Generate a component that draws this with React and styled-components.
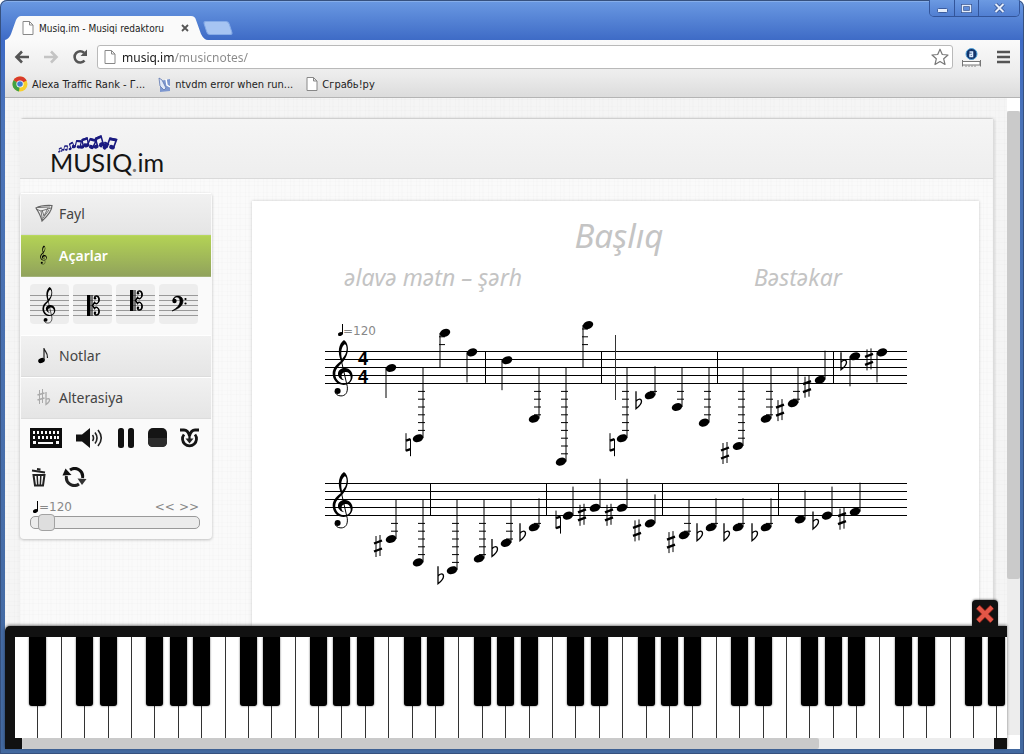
import React, { useState } from 'react';
import styled, { createGlobalStyle, css } from 'styled-components';

const GlobalStyle = createGlobalStyle`
  * {
    box-sizing: border-box;
  }

  body {
    margin: 0;
    background: #fff;
    font-family: "Noto Sans", "Open Sans", sans-serif;
    overflow: hidden;
  }

  button {
    padding: 0;
    border: 0;
    background: none;
    font: inherit;
    color: inherit;
    cursor: pointer;
  }

  svg {
    display: block;
  }
`;

const linen = css`
  background-image:
    repeating-linear-gradient(90deg, rgba(0, 0, 0, 0.01) 0 1px, transparent 1px 3px, rgba(0, 0, 0, 0.006) 3px 5px, transparent 5px 9px),
    repeating-linear-gradient(0deg, rgba(0, 0, 0, 0.01) 0 1px, transparent 1px 4px, rgba(0, 0, 0, 0.006) 4px 5px, transparent 5px 11px);
`;

/* browser window */

const Window = styled.div`
  display: flex;
  flex-direction: column;
  height: 100vh;
  padding: 0 4px 5px 5px;
  background: linear-gradient(#6b9ae3, #3e6bc6 40px, #4a73b8 120px, #43699f);
  border-radius: 7px 7px 0 0;
  box-shadow: inset 0 0 0 1px #36517f, inset 0 2px 0 #86aeea;
  overflow: hidden;
  font-family: "Noto Sans", "Open Sans", sans-serif;
`;

const TitleBar = styled.header`
  display: flex;
  align-items: flex-end;
  height: 40px;
  flex: none;
`;

const Tab = styled.div`
  display: flex;
  align-items: center;
  gap: 5px;
  width: 203px;
  height: 24px;
  padding: 0 19px 0 17px;
  background: #fafafa;
  clip-path: path("M0 24 Q4 23 6 18 L11 4 Q13 0 16 0 H186 Q190 0 191 4 L196 18 Q199 24 203 24 Z");
  font: 10px "DejaVu Sans Condensed", "Noto Sans", sans-serif;
  color: #222;
  white-space: nowrap;
`;

const TabTitle = styled.span`
  flex: 1;
`;

const TabClose = styled.button`
  width: 8px;
  height: 8px;
`;

const NewTab = styled.button`
  align-self: flex-end;
  width: 26px;
  height: 14px;
  margin: 0 0 5px -3px;
  background: #a6c4f2;
  border: 1px solid #86abe6;
  border-radius: 3px;
  transform: skewX(18deg);
`;

const WindowButtons = styled.div`
  display: flex;
  align-self: flex-start;
  height: 17px;
  margin-left: auto;
  border: 1px solid #33559a;
  border-top: 0;
  border-radius: 0 0 5px 5px;
  overflow: hidden;
`;

const WindowButton = styled.button`
  display: grid;
  place-items: center;
  width: ${({ $wide }) => ($wide ? 41 : 24)}px;
  background: linear-gradient(#6c9ae2, #517fd2);
  border-left: ${({ $first }) => ($first ? 0 : '1px solid #33559a')};
`;

const Toolbar = styled.div`
  display: flex;
  align-items: center;
  gap: 13px;
  flex: none;
  height: 34px;
  padding: 0 10px 0 9px;
  background: linear-gradient(#fafafa, #ececec);
`;

const ToolButton = styled.button`
  width: 16px;
  height: 16px;
`;

const AddressBar = styled.form`
  display: flex;
  align-items: center;
  flex: 1;
  height: 24px;
  margin: 0 -4px;
  padding: 0 3px 0 6px;
  gap: 6px;
  background: #fff;
  border: 1px solid #b9b9b9;
  border-radius: 3px;
`;

const AddressInput = styled.input`
  flex: 1;
  min-width: 0;
  padding: 0;
  border: 0;
  outline: 0;
  font: 12px "Noto Sans", sans-serif;
  color: transparent;
  background: linear-gradient(90deg, #1a1a1a 53px, #8a8a8a 53px);
  -webkit-background-clip: text;
  background-clip: text;
`;

const Bookmarks = styled.nav`
  display: flex;
  gap: 13px;
  flex: none;
  height: 24px;
  padding: 1px 7px 0;
  background: linear-gradient(#ececec, #dcdcdc);
  border-bottom: 1px solid #b4b4b4;
`;

const Bookmark = styled.a`
  display: flex;
  align-items: center;
  gap: 4px;
  height: 18px;
  font: 11px "DejaVu Sans Condensed", "Noto Sans", sans-serif;
  color: #222;
  text-decoration: none;
  white-space: nowrap;
`;

/* page inside the window */

const Viewport = styled.div`
  display: flex;
  flex: 1;
  min-height: 0;
  background: #fff;
`;

const Page = styled.div`
  display: flex;
  flex-direction: column;
  flex: 1;
  min-width: 0;
  background-color: #f5f5f5;
  ${linen}
`;

const PageBody = styled.main`
  flex: 1;
  min-height: 0;
  padding: 20px 13px 0 15px;
  overflow: hidden;
`;

const Shell = styled.div`
  display: flex;
  flex-direction: column;
  height: 100%;
  background-color: #fafafa;
  border-top: 1px solid #cfcfcf;
  border-right: 1px solid #dcdcdc;
  border-radius: 4px 4px 0 0;
  box-shadow: 1px 0 3px rgba(0, 0, 0, 0.12);
  ${linen}
`;

const Banner = styled.div`
  flex: none;
  height: 60px;
  padding: 15px 31px 0;
  background: linear-gradient(#f5f5f5, #eeeeee);
  border-bottom: 1px solid #dadada;
`;

const Columns = styled.div`
  display: flex;
  align-items: flex-start;
  gap: 40px;
  flex: 1;
  min-height: 0;
  padding-right: 14px;
`;

const Sidebar = styled.aside`
  flex: none;
  width: 192px;
  margin-top: 14px;
  padding: 0 1px;
  background: #fafafa;
  border-radius: 4px;
  box-shadow: 0 1px 3px rgba(0, 0, 0, 0.24);
`;

const MenuItem = styled.button`
  display: flex;
  align-items: center;
  gap: 7px;
  width: 100%;
  height: 42px;
  padding: 0 14px 2px;
  background: linear-gradient(#f1f1f1, #e5e5e5);
  border-top: 1px solid #fff;
  border-bottom: 1px solid #dcdcdc;
  font-size: 14px;
  color: #444;

  ${({ $active }) => $active && css`
    background: linear-gradient(#b3d255, #91a35c);
    border-top-color: #b8d85e;
    border-bottom-color: #a3b37a;
    color: #fff;
    font-weight: 600;
  `}
`;

const MenuIcon = styled.span`
  display: grid;
  place-items: center;
  width: 17px;
`;

const ClefRow = styled.div`
  display: grid;
  grid-template-columns: repeat(4, 39px);
  gap: 4px;
  padding: 7px 9px 11px;
`;

const ClefButton = styled.button`
  height: 40px;
  background: #ededed;
  border-radius: 4px;
`;

const Controls = styled.div`
  display: flex;
  flex-wrap: wrap;
  align-items: center;
  gap: 17px 13px;
  padding: 8px 9px 0;
`;

const ControlButton = styled.button`
  display: grid;
  place-items: center;
  width: ${({ $width }) => $width}px;
  height: 22px;
`;

const TempoRow = styled.div`
  display: flex;
  align-items: center;
  height: 18px;
  padding: 0 12px;
  margin-top: 10px;
  font: 12px "DejaVu Sans", sans-serif;
  color: #888;
`;

const TempoLabel = styled.label`
  display: flex;
  align-items: center;
  flex: 1;
`;

const Step = styled.button`
  margin-left: 4px;
`;

const Slider = styled.input.attrs({ type: 'range' })`
  appearance: none;
  display: block;
  width: 170px;
  height: 13px;
  margin: 0 9px;
  background: #ececec;
  border: 1px solid #999;
  border-radius: 5px;

  &::-webkit-slider-thumb {
    appearance: none;
    width: 17px;
    height: 17px;
    background: #dedede;
    border: 1px solid #a2a2a2;
    border-radius: 4px;
  }
`;

const SliderBox = styled.div`
  padding: 0 0 10px;
`;

const Paper = styled.section`
  flex: 1;
  min-width: 0;
  align-self: stretch;
  margin-top: 22px;
  padding: 10px 0 0 2px;
  background: #fff;
  box-shadow: 0 0 3px rgba(0, 0, 0, 0.2);
`;

const TitleInput = styled.input`
  display: block;
  width: 100%;
  height: 48px;
  padding: 0 0 0 5px;
  border: 0;
  outline: 0;
  background: none;
  font: italic 33px "Noto Sans", sans-serif;
  text-align: center;

  &::placeholder {
    color: #c4c4c4;
  }
`;

const Credits = styled.div`
  display: flex;
  justify-content: space-between;
  padding: 1px 42px 0 90px;
`;

const CreditInput = styled.input`
  width: 183px;
  height: 34px;
  padding: 0;
  border: 0;
  outline: 0;
  background: none;
  font: italic 23px "Noto Sans", sans-serif;

  &::placeholder {
    color: #c4c4c4;
  }
`;

const Score = styled.svg`
  width: 583px;
  max-width: 100%;
  margin: 24px auto 0;
`;

const Scrollbar = styled.div`
  flex: none;
  width: 13px;
  padding: 13px 0 14px;
  background: #fff;
`;

const ScrollTrack = styled.div`
  height: 100%;
  background: #ededed;
`;

const ScrollThumb = styled.div`
  width: ${({ $horizontal }) => ($horizontal ? '82%' : '100%')};
  height: ${({ $horizontal }) => ($horizontal ? '100%' : '75%')};
  background: #cacaca;
  border-radius: 2px;
`;

/* piano */

const Piano = styled.section`
  position: relative;
  flex: none;
  padding: 11px 0 0 10px;
  background: #111;
  border-radius: 5px 0 0 0;
  box-shadow: 0 -1px 3px rgba(0, 0, 0, 0.5);
`;

const PianoClose = styled.button`
  position: absolute;
  top: -26px;
  right: 9px;
  display: grid;
  place-items: center;
  width: 26px;
  height: 27px;
  background: #111;
  border-radius: 4px 4px 0 0;
  box-shadow: 0 -1px 2px rgba(0, 0, 0, 0.4);
`;

const KeyClip = styled.div`
  overflow: hidden;
`;

const Keys = styled.div`
  display: flex;
  height: 101px;
  margin-right: -14px;
`;

const KeySlot = styled.div`
  position: relative;
  flex: 1;
`;

const WhiteKey = styled.button`
  display: block;
  width: 100%;
  height: 100%;
  background: #fff;
  border-right: 1px solid #333;
`;

const BlackKey = styled.button`
  position: absolute;
  z-index: 1;
  top: 0;
  right: -8px;
  width: 17px;
  height: 69px;
  background: #000;
  border-radius: 0 0 3px 3px;
  box-shadow: 0 0 2px rgba(0, 0, 0, 0.7);
`;

const PianoScroll = styled.div`
  height: 11px;
  margin: 0 13px 0 7px;
  background: #ededed;
`;

/* music drawings */

const TrebleClef = () => (
  <g>
    <path
      fillRule="evenodd"
      d="M78 165 C67 140 70 114 87 102 C97 108 101 125 98 138 C94 156 86 166 74 178 C64 188 60 197 61 207 C63 222 74 232 88 232 C101 232 108 223 107 213 C106 203 99 197 91 198 C83 199 78 206 80 213 C81 218 84 220 88 223 C78 222 69 214 69 204 C69 193 79 185 91 186 C104 187 114 198 113 212 C112 228 100 237 86 237 C66 237 53 222 53 203 C53 188 62 177 78 165 Z M81 159 C90 150 95 141 95 128 C95 119 92 115 89 115 C80 121 76 138 81 159 Z"
    />
    <path d="M77 155 L97 242 C99 262 90 270 78 270 C68 270 62 265 60 257" fill="none" stroke="#000" strokeWidth="3" />
    <circle cx="68" cy="255" r="9" />
  </g>
);

const CClef = () => (
  <g>
    <rect width="3.500" height="21" />
    <rect x="4.500" width="1" height="21" />
    <path
      d="M7.500 3 C7.500 -0.200 12 0.200 12 4.500 C12 9 9 9.500 7.500 7.500 L5.500 10.500 L7.500 13.500 C9 11.500 12 12 12 16.500 C12 20.800 7.500 21.200 7.500 18"
      fill="none"
      stroke="#000"
      strokeWidth="1.500"
    />
    <circle cx="8" cy="3.200" r="1.200" />
    <circle cx="8" cy="17.800" r="1.200" />
    <path d="M11.500 1.500 Q14 4.500 11.500 8 Z M11.500 13 Q14 16.500 11.500 19.500 Z" />
  </g>
);

const BassClef = () => (
  <g>
    <circle cx="2.500" cy="5" r="2.200" />
    <path d="M1 5 C0 -1 11 -2 11 5 C11 10 6 13 0 15 C5 12 8 9 8 5 C8 0 2 0 2 4 Z" stroke="#000" strokeWidth="0.600" />
    <circle cx="13.500" cy="3" r="1.100" />
    <circle cx="13.500" cy="7.500" r="1.100" />
  </g>
);

const Sharp = () => (
  <g>
    <path d="M-2 -10 V11 M2 -11 V10" stroke="#000" strokeWidth="1" />
    <path d="M-4 -2.500 L4 -5.500 M-4 5.500 L4 2.500" stroke="#000" strokeWidth="2.400" />
  </g>
);

const Flat = () => (
  <path
    d="M-2 -11 V6.500 C0 5 3.500 2 3.500 -1 C3.500 -4 0 -4 -2 -1"
    fill="none"
    stroke="#000"
    strokeWidth="1.300"
  />
);

const Natural = () => (
  <g>
    <path d="M-2 -12 V6 M2.500 -6 V11" stroke="#000" strokeWidth="1" />
    <path d="M-2 -4.500 L2.500 -6 M-2 5.500 L2.500 4" stroke="#000" strokeWidth="2.400" />
  </g>
);

const QuarterNote = ({ x = 0, y = 0 }) => (
  <g transform={`translate(${x} ${y})`}>
    <ellipse cx="2.500" cy="10" rx="2.600" ry="1.900" transform="rotate(-20 2.500 10)" />
    <path d="M4.500 0 V10" stroke="#000" strokeWidth="1" />
  </g>
);

const ACCIDENTALS = {
  sharp: { Shape: Sharp, dx: -13, dy: 7 },
  flat: { Shape: Flat, dx: -12, dy: 7 },
  natural: { Shape: Natural, dx: -10, dy: 7 },
};

// distance between two neighbouring note positions
const HALF = 3.9;

// step counts down from the middle line
const STAVES = [
  {
    y: 50,
    bars: [160, 276, 392, 508],
    notes: [
      { x: 66, step: 0 },
      { x: 93, step: 18, sign: 'natural' },
      { x: 120, step: -9 },
      { x: 147, step: -4 },
      { x: 182, step: -2 },
      { x: 209, step: 13 },
      { x: 236, step: 24 },
      { x: 263, step: -11 },
      { x: 297, step: 18, sign: 'natural' },
      { x: 325, step: 7, sign: 'flat' },
      { x: 352, step: 10 },
      { x: 379, step: 14 },
      { x: 413, step: 20, sign: 'sharp' },
      { x: 441, step: 13 },
      { x: 468, step: 9, sign: 'sharp' },
      { x: 495, step: 3, sign: 'sharp' },
      { x: 530, step: -3, sign: 'flat' },
      { x: 557, step: -4, sign: 'sharp' },
    ],
  },
  {
    y: 182,
    bars: [105, 221, 337, 453],
    notes: [
      { x: 66, step: 10, sign: 'sharp' },
      { x: 93, step: 16 },
      { x: 127, step: 18, sign: 'flat' },
      { x: 154, step: 15 },
      { x: 181, step: 11, sign: 'flat' },
      { x: 209, step: 7, sign: 'flat' },
      { x: 243, step: 4, sign: 'natural' },
      { x: 270, step: 2, sign: 'sharp' },
      { x: 297, step: 2, sign: 'sharp' },
      { x: 325, step: 6, sign: 'sharp' },
      { x: 359, step: 9, sign: 'sharp' },
      { x: 386, step: 7, sign: 'flat' },
      { x: 413, step: 7, sign: 'flat' },
      { x: 441, step: 7, sign: 'flat' },
      { x: 475, step: 5 },
      { x: 502, step: 4, sign: 'flat' },
      { x: 530, step: 3, sign: 'sharp' },
    ],
  },
];

const ledgerSteps = (step) => {
  const steps = [];
  for (let s = 6; s < Math.abs(step); s += 2) {
    steps.push(step > 0 ? s : -s);
  }
  return steps;
};

const Note = ({ x, step, sign }) => {
  const y = step * HALF;
  const down = step <= 0;
  const stemX = down ? x - 5 : x + 5;
  const long = Math.abs(step) > 7;
  const stemEnd = long ? 0 : y + (down ? 30 : -29);
  const accidental = sign && ACCIDENTALS[sign];

  return (
    <g>
      <ellipse cx={x} cy={y} rx="5.400" ry="3.800" transform={`rotate(-20 ${x} ${y})`} />
      <line x1={stemX} x2={stemX} y1={y} y2={stemEnd} stroke="#000" />
      {ledgerSteps(step).map((s) => (
        <line
          key={s}
          x1={down ? stemX - 1 : stemX - 5}
          x2={down ? stemX + 5 : stemX + 2}
          y1={s * HALF}
          y2={s * HALF}
          stroke="#000"
        />
      ))}
      {accidental && (
        <g transform={`translate(${x + accidental.dx} ${y + accidental.dy})`}>
          <accidental.Shape />
        </g>
      )}
    </g>
  );
};

const Staff = ({ y, bars, notes }) => (
  <g transform={`translate(0 ${y})`}>
    {[-16, -8, 0, 8, 16].map((line) => (
      <line key={line} x1="0" x2="582" y1={line - 0.5} y2={line - 0.5} stroke="#000" shapeRendering="crispEdges" />
    ))}
    {bars.map((x) => (
      <line key={x} x1={x + 0.5} x2={x + 0.5} y1="-16" y2="16" stroke="#000" shapeRendering="crispEdges" />
    ))}
    <g transform="translate(-10 -62) scale(0.333)">
      <TrebleClef />
    </g>
    {notes.map((note) => (
      <Note key={note.x} {...note} />
    ))}
  </g>
);

const Sheet = ({ tempo }) => (
  <Score viewBox="0 0 583 280" role="img" aria-label="Notlar">
    <QuarterNote x={13} y={6} />
    <text x="18" y="17" fontSize="12" fill="#888" fontFamily="DejaVu Sans">={tempo}</text>
    {STAVES.map((staff) => (
      <Staff key={staff.y} {...staff} />
    ))}
    <text fontSize="18" fontWeight="700" fontFamily="Liberation Sans Narrow, Liberation Sans" textAnchor="middle">
      <tspan x="38" y="47">4</tspan>
      <tspan x="38" y="65">4</tspan>
    </text>
    <line x1="290.500" x2="290.500" y1="17" y2="82" stroke="#333" />
  </Score>
);

/* icons */

const PageIcon = () => (
  <svg width="12" height="14" viewBox="0 0 12 14">
    <path d="M1 0.500 H7.500 L11 4 V13.500 H1 Z M7.500 0.500 V4 H11" fill="#fff" stroke="#888" />
  </svg>
);

const ChromeIcon = () => (
  <svg width="16" height="16" viewBox="0 0 16 16">
    <circle cx="8" cy="8" r="7.500" fill="#f7cf2d" />
    <path d="M8 8 L1.500 4.200 A7.500 7.500 0 0 1 14.700 4.600 Z" fill="#d93a2b" />
    <path d="M8 8 L1.500 4.200 A7.500 7.500 0 0 0 7 15.400 Z" fill="#3fa144" />
    <circle cx="8" cy="8" r="3.600" fill="#fff" />
    <circle cx="8" cy="8" r="2.800" fill="#3f7bd0" />
  </svg>
);

const ToolsIcon = () => (
  <svg width="13" height="15" viewBox="0 0 13 15">
    <path d="M2 4 L12 2 V14 L2 15 Z" fill="#7d97cf" />
    <path d="M1 1 L4 3 L8 11 L6 13 L2 9 Z" fill="#dfe7f7" stroke="#5d76b0" strokeWidth="0.800" />
    <path d="M8 2 L9 8 L12 10" fill="none" stroke="#fff" strokeWidth="1.500" />
  </svg>
);

const CrossIcon = () => (
  <svg width="8" height="8" viewBox="0 0 8 8">
    <path d="M1 1 L7 7 M7 1 L1 7" stroke="#555" strokeWidth="1.800" />
  </svg>
);

const ArrowIcon = ({ color, flip }) => (
  <svg width="16" height="16" viewBox="0 0 16 16">
    <path
      d="M8 2.500 L2.500 8 L8 13.500 M3 8 H15"
      transform={flip ? 'translate(16 0) scale(-1 1)' : undefined}
      fill="none"
      stroke={color}
      strokeWidth="2.600"
    />
  </svg>
);

const ReloadIcon = () => (
  <svg width="16" height="16" viewBox="0 0 16 16">
    <path d="M12.500 11.500 A5.600 5.600 0 1 1 12 3.800" fill="none" stroke="#555" strokeWidth="2.600" />
    <path d="M15 0.500 V7 H8.500 Z" fill="#555" />
  </svg>
);

const StarIcon = () => (
  <svg width="18" height="18" viewBox="0 0 18 18">
    <path
      d="M9 1.200 L11.300 6.500 L17 7 L12.700 10.800 L14 16.500 L9 13.500 L4 16.500 L5.300 10.800 L1 7 L6.700 6.500 Z"
      fill="#fff"
      stroke="#777"
      strokeWidth="1.200"
      strokeLinejoin="round"
    />
  </svg>
);

const AlexaIcon = () => (
  <svg width="19" height="19" viewBox="0 0 19 19">
    <circle cx="9.500" cy="6" r="5.500" fill="#12346b" stroke="#4fa0d8" />
    <path d="M7.500 4 H10.500 V8.500 H8 V6.200 H10.500" fill="none" stroke="#dcecff" strokeWidth="1.500" />
    <path d="M0.500 12 V18.500 M18.500 12 V18.500 M1 13.500 H18 V17 H1" fill="#fff" stroke="#777" />
    <path d="M4 17.500 V19 M7 17.500 V19 M10 17.500 V19 M13 17.500 V19" stroke="#888" />
  </svg>
);

const MenuLines = () => (
  <svg width="16" height="16" viewBox="0 0 16 16">
    <path d="M3 3 H16 M3 8 H16 M3 13 H16" stroke="#555" strokeWidth="2.600" />
  </svg>
);

const LogoNote = ({ x, y, size, turn }) => (
  <g transform={`translate(${x} ${y}) rotate(${turn}) scale(${size})`}>
    <ellipse cx="-3" cy="4" rx="2.600" ry="2" />
    <ellipse cx="3" cy="3" rx="2.600" ry="2" />
    <path d="M-1.500 4 V-4 L4.500 -5 V3" fill="none" stroke="#1b1b80" strokeWidth="1.500" />
    <path d="M-1.500 -3.500 L4.500 -4.500" stroke="#1b1b80" strokeWidth="2.600" />
  </g>
);

const Logo = () => (
  <svg width="120" height="44" viewBox="0 0 120 44" role="img" aria-label="MUSIQ.im">
    <g fill="#1b1b80">
      <LogoNote x={9} y={16} size={0.4} turn={-10} />
      <LogoNote x={14} y={14} size={0.5} turn={10} />
      <LogoNote x={20} y={12} size={0.6} turn={-20} />
      <LogoNote x={26} y={10} size={0.8} turn={15} />
      <LogoNote x={33} y={9} size={0.9} turn={-10} />
      <LogoNote x={39} y={9} size={1} turn={25} />
      <LogoNote x={47} y={8} size={1} turn={-15} />
      <LogoNote x={53} y={11} size={0.7} turn={40} />
      <LogoNote x={59} y={9} size={1.1} turn={20} />
    </g>
    <text x="-1" y="38" fontFamily="Lato" fontSize="25" fill="#151515">MUSIQ<tspan fill="#777">.</tspan>im</text>
  </svg>
);

const FileIcon = () => (
  <svg width="18" height="18" viewBox="0 0 18 18" fill="none" stroke="#666">
    <path d="M1 4 Q6 1 17 1.500 Q17 8 7 17 Q6 12 1 4 Z" strokeWidth="1.200" />
    <path d="M1 5 L6 7 L7.500 16 M6 7 L16 4 M7 6 L9 12 L13 4 M3 3.500 L15 3 M8 14 L14 6" strokeWidth="0.900" />
  </svg>
);

const TrebleIcon = () => (
  <svg width="9" height="20" viewBox="50 98 66 178">
    <TrebleClef />
  </svg>
);

const EighthIcon = () => (
  <svg width="11" height="17" viewBox="0 0 11 17">
    <ellipse cx="3.500" cy="13.500" rx="3.400" ry="2.500" transform="rotate(-20 3.500 13.500)" />
    <path d="M6 13 V1 C6.500 5 10 5 9.500 11" fill="none" stroke="#222" strokeWidth="1.200" />
  </svg>
);

const AccidentalsIcon = () => (
  <svg width="14" height="17" viewBox="0 0 14 17" fill="none" stroke="#aaa">
    <path d="M2.500 1 V15 M5.500 0 V14" />
    <path d="M0.500 6 L7.500 4 M0.500 11 L7.500 9" strokeWidth="1.800" />
    <path d="M9 3 V15.500 C14 12 13.500 8 9 10.500" strokeWidth="1.300" />
  </svg>
);

const ClefIcon = ({ kind }) => (
  <svg width="39" height="40" viewBox="0 0 39 40">
    {[11, 16, 21, 26, 31].map((y) => (
      <line key={y} x1="0" x2="39" y1={y + 0.5} y2={y + 0.5} stroke="#999" />
    ))}
    {kind === 'treble' && <g transform="translate(1 -19) scale(0.215)"><TrebleClef /></g>}
    {kind === 'alto' && <g transform="translate(14 11)"><CClef /></g>}
    {kind === 'tenor' && <g transform="translate(14 6)"><CClef /></g>}
    {kind === 'bass' && <g transform="translate(13 12)"><BassClef /></g>}
  </svg>
);

const KeyboardIcon = () => (
  <svg width="32" height="20" viewBox="0 0 32 20">
    <rect width="32" height="20" fill="#0d0d0d" />
    <g fill="#fafafa">
      {[3, 7, 11, 15, 19, 23, 27].map((x) => <rect key={x} x={x} y="3" width="2" height="3" />)}
      {[3, 8, 12, 16, 20, 24, 27].map((x) => <rect key={x} x={x} y="8" width="2" height="3" />)}
      <rect x="3" y="13" width="3" height="3" />
      <rect x="8" y="14" width="15" height="2" />
      <rect x="26" y="13" width="3" height="3" />
    </g>
  </svg>
);

const SpeakerIcon = () => (
  <svg width="27" height="20" viewBox="0 0 27 20">
    <path d="M0 6.500 H6 L14 0 V20 L6 13.500 H0 Z" fill="#111" />
    <path d="M16.500 7 Q18.500 10 16.500 13 M19 4.500 Q23 10 19 15.500 M22 2 Q28.500 10 22 18" fill="none" stroke="#222" strokeWidth="1.600" />
  </svg>
);

const PauseIcon = () => (
  <svg width="17" height="20" viewBox="0 0 17 20">
    <rect width="6" height="20" rx="2.500" fill="#111" />
    <rect x="10" width="6" height="20" rx="2.500" fill="#111" />
  </svg>
);

const StopIcon = () => (
  <svg width="19" height="20" viewBox="0 0 19 20">
    <rect y="0" width="19" height="19" rx="5" fill="#151515" />
    <path d="M0 10 H19 V14 Q19 19 14 19 H5 Q0 19 0 14 Z" fill="#2c2c2c" />
  </svg>
);

const RecordIcon = () => (
  <svg width="19" height="20" viewBox="0 0 19 20" fill="none" stroke="#151515">
    <path d="M0 2 H4 Q8 2 9.500 8 Q11 2 15 2 H19" strokeWidth="2.800" />
    <path d="M4 6.500 A7 7 0 1 0 15 6.500" strokeWidth="2.800" />
    <path d="M9.500 6 V12" strokeWidth="2.200" />
    <path d="M5.500 10.500 H13.500 L9.500 15.500 Z" fill="#222" stroke="none" />
  </svg>
);

const TrashIcon = () => (
  <svg width="16" height="19" viewBox="0 0 16 19" fill="none" stroke="#222">
    <path d="M1 2.500 L14 4.500 M6 1 L9.500 1.500" strokeWidth="1.800" />
    <path d="M2.500 7 L4 17.500 H12 L13.500 7 Z" strokeWidth="2" />
    <path d="M6.200 8 L6.700 17 M9.800 8 L9.300 17" strokeWidth="1.500" />
  </svg>
);

const RefreshIcon = () => (
  <svg width="25" height="20" viewBox="0 0 25 20">
    <path d="M8 3 A8 8 0 0 1 20.500 11" fill="none" stroke="#111" strokeWidth="3" />
    <path d="M17 17 A8 8 0 0 1 4.500 9" fill="none" stroke="#222" strokeWidth="3" />
    <path d="M15.500 11.500 L24.500 12 L20 18 Z" fill="#333" />
    <path d="M9.500 8 L0.500 8.500 L3.500 1.500 Z" fill="#111" />
  </svg>
);

const PianoCross = () => (
  <svg width="20" height="20" viewBox="0 0 20 20">
    <path d="M3 3 L17 17 M17 3 L3 17" stroke="#8e2017" strokeWidth="5.500" />
    <path d="M3 3 L17 17 M17 3 L3 17" stroke="#e45647" strokeWidth="4" />
  </svg>
);

const CLEFS = ['treble', 'alto', 'tenor', 'bass'];
const KEYS = Array.from({ length: 43 }, (_, i) => i + 1);
const hasBlackKey = (n) => n % 7 !== 2 && n % 7 !== 5;

const PLAYER = [
  { label: 'Klaviatura', width: 32, Icon: KeyboardIcon },
  { label: 'Səs', width: 29, Icon: SpeakerIcon },
  { label: 'Pauza', width: 18, Icon: PauseIcon },
  { label: 'Dayandır', width: 19, Icon: StopIcon },
  { label: 'Yaz', width: 19, Icon: RecordIcon },
  { label: 'Sil', width: 18, Icon: TrashIcon },
  { label: 'Təkrar', width: 26, Icon: RefreshIcon },
];

const BrowserChrome = () => (
  <>
    <TitleBar>
      <Tab>
        <PageIcon />
        <TabTitle>Musiq.im - Musiqi redaktoru</TabTitle>
        <TabClose aria-label="Close tab"><CrossIcon /></TabClose>
      </Tab>
      <NewTab aria-label="New tab" />
      <WindowButtons>
        <WindowButton $first aria-label="Minimize">
          <svg width="11" height="9"><rect x="0.500" y="4.500" width="10" height="4" rx="1" fill="#e4edfb" stroke="#3b5c9e" /></svg>
        </WindowButton>
        <WindowButton aria-label="Maximize">
          <svg width="11" height="9"><rect x="1.500" y="1.500" width="8" height="6" fill="none" stroke="#2f4f90" strokeWidth="3" /><rect x="1.500" y="1.500" width="8" height="6" fill="none" stroke="#e4edfb" strokeWidth="1.500" /></svg>
        </WindowButton>
        <WindowButton $wide aria-label="Close">
          <svg width="11" height="10"><path d="M1.500 1 L9.500 9 M9.500 1 L1.500 9" stroke="#2f4f90" strokeWidth="3.600" /><path d="M1.500 1 L9.500 9 M9.500 1 L1.500 9" stroke="#e4edfb" strokeWidth="2" /></svg>
        </WindowButton>
      </WindowButtons>
    </TitleBar>
    <Toolbar>
      <ToolButton aria-label="Back"><ArrowIcon color="#555" /></ToolButton>
      <ToolButton aria-label="Forward"><ArrowIcon color="#c4c4c4" flip /></ToolButton>
      <ToolButton aria-label="Reload"><ReloadIcon /></ToolButton>
      <AddressBar onSubmit={(e) => e.preventDefault()}>
        <PageIcon />
        <AddressInput aria-label="Address" defaultValue="musiq.im/musicnotes/" />
        <StarIcon />
      </AddressBar>
      <AlexaIcon />
      <ToolButton aria-label="Menu"><MenuLines /></ToolButton>
    </Toolbar>
    <Bookmarks>
      <Bookmark href="#alexa"><ChromeIcon />Alexa Traffic Rank - Г...</Bookmark>
      <Bookmark href="#ntvdm"><ToolsIcon />ntvdm error when run...</Bookmark>
      <Bookmark href="#grab"><PageIcon />Сграбь!ру</Bookmark>
    </Bookmarks>
  </>
);

const App = () => {
  const [tempo, setTempo] = useState(120);

  return (
    <Window>
      <GlobalStyle />
      <BrowserChrome />
      <Viewport>
        <Page>
          <PageBody>
            <Shell>
              <Banner><Logo /></Banner>
              <Columns>
                <Sidebar>
                  <MenuItem><MenuIcon><FileIcon /></MenuIcon>Fayl</MenuItem>
                  <MenuItem $active><MenuIcon><TrebleIcon /></MenuIcon>Açarlar</MenuItem>
                  <ClefRow>
                    {CLEFS.map((kind) => (
                      <ClefButton key={kind} aria-label={kind}><ClefIcon kind={kind} /></ClefButton>
                    ))}
                  </ClefRow>
                  <MenuItem><MenuIcon><EighthIcon /></MenuIcon>Notlar</MenuItem>
                  <MenuItem><MenuIcon><AccidentalsIcon /></MenuIcon>Alterasiya</MenuItem>
                  <Controls>
                    {PLAYER.map(({ label, width, Icon }) => (
                      <ControlButton key={label} aria-label={label} $width={width}><Icon /></ControlButton>
                    ))}
                  </Controls>
                  <TempoRow>
                    <TempoLabel htmlFor="tempo">
                      <svg width="6" height="12"><QuarterNote /></svg>
                      ={tempo}
                    </TempoLabel>
                    <Step onClick={() => setTempo(tempo - 1)}>&lt;&lt;</Step>
                    <Step onClick={() => setTempo(tempo + 1)}>&gt;&gt;</Step>
                  </TempoRow>
                  <SliderBox>
                    <Slider
                      id="tempo"
                      min={110}
                      max={320}
                      value={tempo}
                      onChange={(e) => setTempo(Number(e.target.value))}
                    />
                  </SliderBox>
                </Sidebar>
                <Paper>
                  <TitleInput aria-label="Başlıq" placeholder="Başlıq" />
                  <Credits>
                    <CreditInput aria-label="Əlavə mətn" placeholder="əlavə mətn – şərh" />
                    <CreditInput aria-label="Bəstəkar" placeholder="Bəstəkar" />
                  </Credits>
                  <Sheet tempo={tempo} />
                </Paper>
              </Columns>
            </Shell>
          </PageBody>
          <Piano>
            <PianoClose aria-label="Bağla"><PianoCross /></PianoClose>
            <KeyClip>
              <Keys>
                {KEYS.map((n) => (
                  <KeySlot key={n}>
                    <WhiteKey aria-label={`Key ${n}`} />
                    {hasBlackKey(n) && <BlackKey aria-label={`Black key ${n}`} />}
                  </KeySlot>
                ))}
              </Keys>
            </KeyClip>
            <PianoScroll><ScrollThumb $horizontal /></PianoScroll>
          </Piano>
        </Page>
        <Scrollbar>
          <ScrollTrack><ScrollThumb /></ScrollTrack>
        </Scrollbar>
      </Viewport>
    </Window>
  );
};

export default App;
